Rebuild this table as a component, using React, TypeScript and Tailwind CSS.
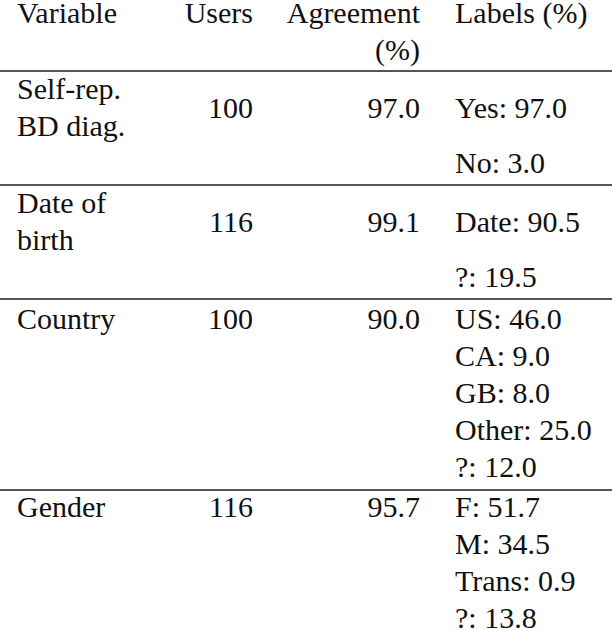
import React from 'react';

type Row = {
  variable: React.ReactNode;
  users: string;
  agreement: string;
  labels: string[];
  rowClass: string;
  innerClass: string;
};

const rows: Row[] = [
  {
    variable: (
      <>
        Self-rep.
        <br />
        BD diag.
      </>
    ),
    users: '100',
    agreement: '97.0',
    labels: ['Yes: 97.0', 'No: 3.0'],
    rowClass: 'pb-[3px] border-b-2',
    innerClass: '-mt-[2px]',
  },
  {
    variable: (
      <>
        Date of
        <br />
        birth
      </>
    ),
    users: '116',
    agreement: '99.1',
    labels: ['Date: 90.5', '?: 19.5'],
    rowClass: 'pb-[3px] border-b-2',
    innerClass: '-mt-[2px]',
  },
  {
    variable: 'Country',
    users: '100',
    agreement: '90.0',
    labels: ['US: 46.0', 'CA: 9.0', 'GB: 8.0', 'Other: 25.0', '?: 12.0'],
    rowClass: 'pb-[4px] border-b-2',
    innerClass: 'mt-0',
  },
  {
    variable: 'Gender',
    users: '116',
    agreement: '95.7',
    labels: ['F: 51.7', 'M: 34.5', 'Trans: 0.9', '?: 13.8'],
    rowClass: '',
    innerClass: '-mt-[3px]',
  },
];

const App: React.FC = () => {
  return (
    <div className="w-[612px] h-[630px] overflow-hidden bg-white font-[family-name:Times_New_Roman,Times,Nimbus_Roman,Liberation_Serif,Georgia,Cambria,ui-serif,serif] text-[30px] leading-[37px] text-[#111]">
      <div className="-mt-[6px]">
        {/* Header */}
        <div className="grid grid-cols-[153px_83px_167px_1fr] pl-[17px] pb-[2px] border-b-2 border-[#555]">
          <div>Variable</div>
          <div className="text-right">Users</div>
          <div className="text-right">
            Agreement
            <br />
            (%)
          </div>
          <div className="pl-[35px]">Labels (%)</div>
        </div>

        {/* Body rows */}
        {rows.map((row, i) => (
          <div key={i} className={`pl-[17px] border-[#555] ${row.rowClass}`}>
            <div className={`grid grid-cols-[153px_83px_167px_1fr] ${row.innerClass}`}>
              <div className="self-center">{row.variable}</div>
              <div className="self-center text-right">{row.users}</div>
              <div className="self-center text-right">{row.agreement}</div>
              <div className="self-center pl-[35px] whitespace-nowrap">{row.labels[0]}</div>
              {row.labels.slice(1).map((label) => (
                <div key={label} className="col-start-4 pl-[35px] whitespace-nowrap">
                  {label}
                </div>
              ))}
            </div>
          </div>
        ))}
      </div>
    </div>
  );
};

export default App;
